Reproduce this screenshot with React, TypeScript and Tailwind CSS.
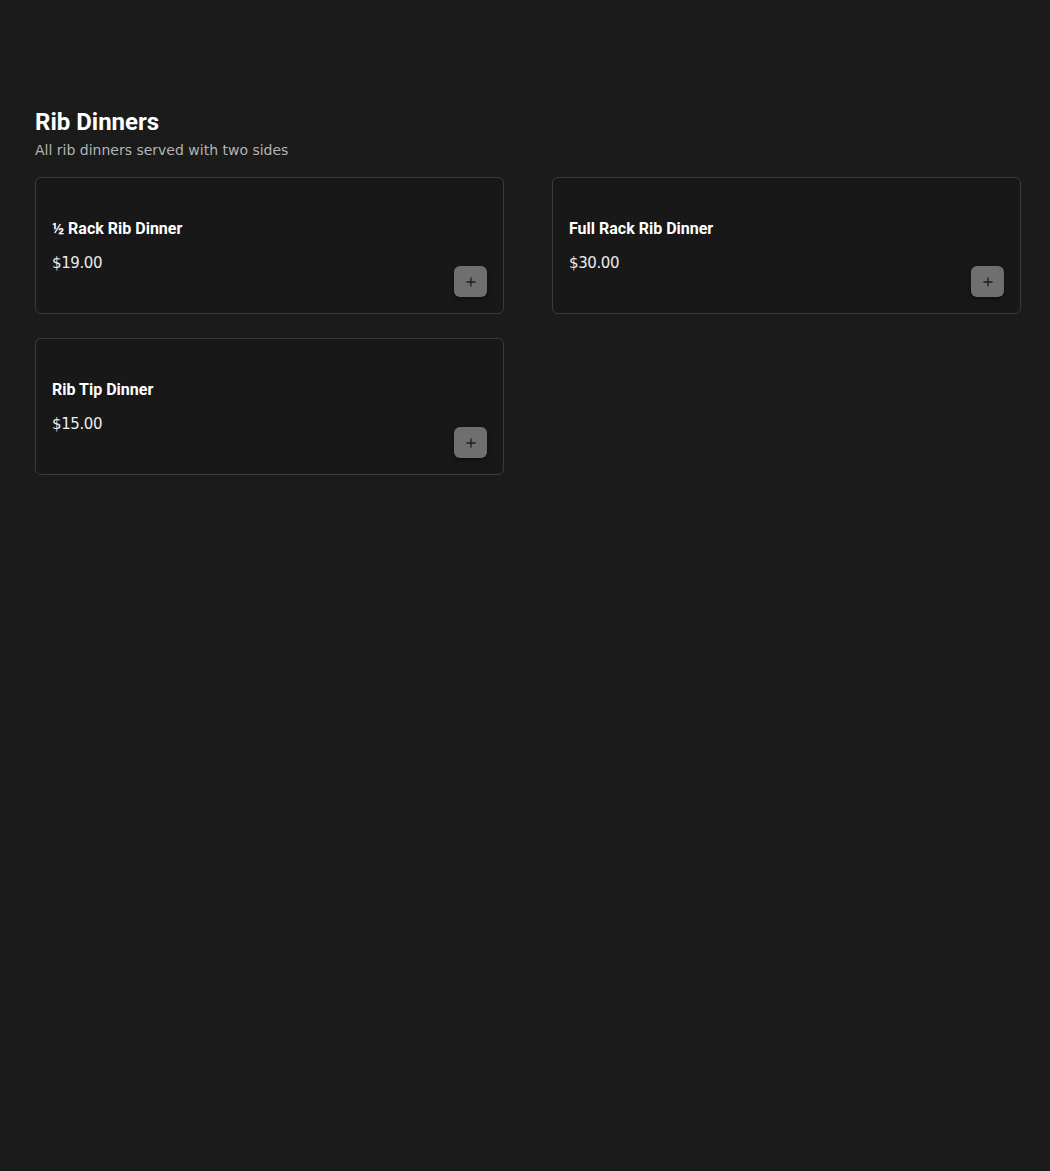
import { Plus } from "lucide-react";

type Item = { name: string; price: string };

const items: Item[] = [
  { name: "½ Rack Rib Dinner", price: "$19.00" },
  { name: "Full Rack Rib Dinner", price: "$30.00" },
  { name: "Rib Tip Dinner", price: "$15.00" },
];

const MenuCard = ({ item }: { item: Item }) => {
  return (
    <div className="flex justify-between items-end h-[137px] rounded-md border border-[#3a3a3a] bg-[#181818] px-4 pb-4">
      <div className="flex flex-col pb-[22px]">
        <h3 className="font-['Roboto',sans-serif] font-bold text-[16px] leading-5 text-white">
          {item.name}
        </h3>
        <p className="mt-3 font-['DejaVu_Sans',sans-serif] text-[15px] tracking-[-0.4px] leading-6 text-[#ebebeb]">
          {item.price}
        </p>
      </div>
      <button className="flex items-center justify-center w-[33px] h-[31px] rounded-md bg-[#6f6f6f] shadow-[0_2px_4px_rgba(0,0,0,0.5)]">
        <Plus size={14} strokeWidth={2.25} className="text-[#1e1e1e]" />
      </button>
    </div>
  );
};

const App = () => {
  return (
    <div className="min-h-screen w-full bg-[#1b1b1b] px-[35px] pt-[108px]">
      <h2 className="font-['Roboto',sans-serif] font-bold text-[24px] leading-7 text-white">
        Rib Dinners
      </h2>
      <p className="font-['DejaVu_Sans',sans-serif] text-[14px] leading-5 text-[#b3b3b3] mt-1">
        All rib dinners served with two sides
      </p>
      <div className="grid grid-cols-2 gap-x-[48px] gap-y-[24px] mt-[17px] w-[986px]">
        {items.map((item) => (
          <MenuCard key={item.name} item={item} />
        ))}
      </div>
    </div>
  );
};

export default App;
